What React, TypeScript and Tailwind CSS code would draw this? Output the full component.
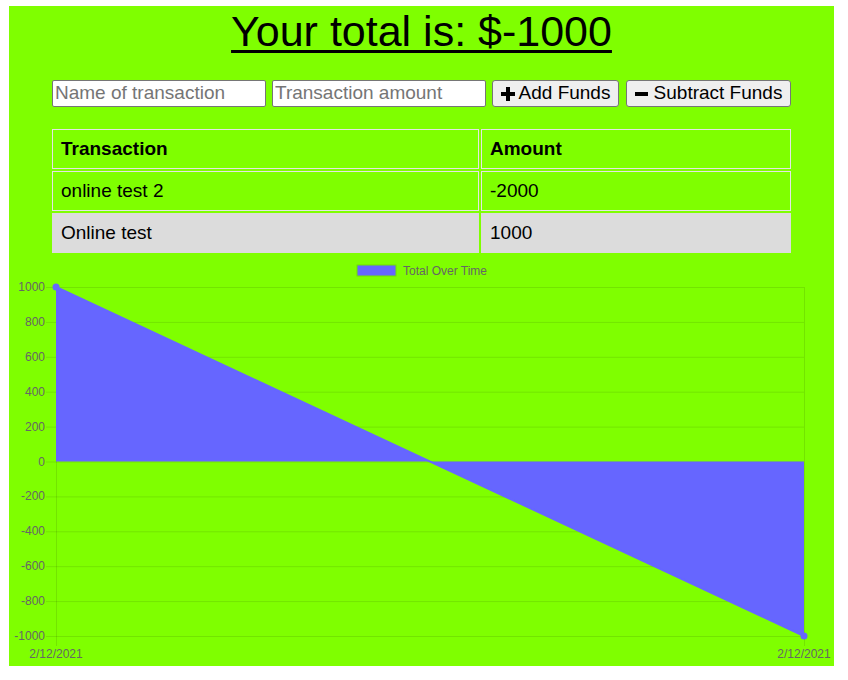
const rows = [
  { name: 'online test 2', amount: '-2000', shaded: false },
  { name: 'Online test', amount: '1000', shaded: true },
]

const yTicks = [1000, 800, 600, 400, 200, 0, -200, -400, -600, -800, -1000]

// plot area inside the chart svg
const left = 47
const right = 795
const top = 29
const bottom = 378
const step = (bottom - top) / 10
const zeroY = top + 5 * step

const Chart = () => {
  return (
    <svg width={825} height={408} className="block">
      {/* legend */}
      <rect x={348} y={7} width={39} height={11} fill="#6666ff" stroke="#70e000" strokeWidth={1} />
      <text x={394} y={16.5} fontSize={12} fill="#666" fontFamily="'Liberation Sans', Arial, sans-serif">
        Total Over Time
      </text>

      {/* horizontal grid */}
      {yTicks.map((t, i) => {
        const y = top + i * step
        return (
          <g key={t}>
            <line x1={37} x2={right} y1={y + 0.5} y2={y + 0.5} stroke="rgba(0,0,0,0.1)" strokeWidth={1} />
            <text
              x={36}
              y={y + 4}
              textAnchor="end"
              fontSize={12}
              fill="#666"
              fontFamily="'Liberation Sans', Arial, sans-serif"
            >
              {t}
            </text>
          </g>
        )
      })}

      {/* vertical grid */}
      <line x1={left + 0.5} x2={left + 0.5} y1={top} y2={bottom + 10} stroke="rgba(0,0,0,0.1)" />
      <line x1={right + 0.5} x2={right + 0.5} y1={top} y2={bottom + 10} stroke="rgba(0,0,0,0.1)" />

      {/* area */}
      <polygon
        points={`${left},${zeroY} ${left},${top} ${right},${bottom} ${right},${zeroY}`}
        fill="#6666ff"
      />
      <line x1={left} y1={top} x2={right} y2={bottom} stroke="#6666ff" strokeWidth={2} />
      <circle cx={left} cy={top} r={3.5} fill="#6666ff" />
      <circle cx={right} cy={bottom} r={3.5} fill="#6666ff" />

      {/* x labels */}
      <text x={left} y={400} textAnchor="middle" fontSize={12} fill="#666" fontFamily="'Liberation Sans', Arial, sans-serif">
        2/12/2021
      </text>
      <text x={right} y={400} textAnchor="middle" fontSize={12} fill="#666" fontFamily="'Liberation Sans', Arial, sans-serif">
        2/12/2021
      </text>
    </svg>
  )
}

const App = () => {
  return (
    <div className="min-h-screen bg-white pl-[9px] pt-[6px] font-['Liberation_Sans',Arial,sans-serif] text-black">
      <div className="flex h-[660px] w-[825px] flex-col items-center bg-[#7fff00]">
        <h1 className="pt-[4px] text-[43px] leading-none underline decoration-[3px] underline-offset-[4px]">
          Your total is: $-1000
        </h1>

        <form className="mt-[27px] flex gap-[6px]" onSubmit={(e) => e.preventDefault()}>
          <input
            type="text"
            placeholder="Name of transaction"
            className="h-[27px] w-[214px] rounded-[2px] border border-[#767676] bg-white px-[2px] text-[19px] placeholder:text-[#757575]"
          />
          <input
            type="number"
            placeholder="Transaction amount"
            className="h-[27px] w-[214px] rounded-[2px] border border-[#767676] bg-white px-[2px] text-[19px] placeholder:text-[#757575]"
          />
          <button className="flex h-[27px] w-[127px] items-center justify-center gap-[4px] rounded-[3px] border border-[#767676] bg-[#efefef] text-[19px]">
            <svg width="14" height="14" viewBox="0 0 14 14">
              <rect x="5" y="0" width="4" height="14" fill="black" />
              <rect x="0" y="5" width="14" height="4" fill="black" />
            </svg>
            Add Funds
          </button>
          <button className="ml-[1px] flex h-[27px] w-[165px] items-center justify-center gap-[6px] rounded-[3px] border border-[#767676] bg-[#efefef] text-[19px]">
            <svg width="13" height="14" viewBox="0 0 13 14">
              <rect x="0" y="5" width="13" height="4" fill="black" />
            </svg>
            Subtract Funds
          </button>
        </form>

        <div className="mt-[22px] grid grid-cols-[427px_310px] gap-[2px] text-[19px]">
          <div className="flex h-[40px] items-center border border-[#e4e4e4] pl-[8px] font-bold">Transaction</div>
          <div className="flex h-[40px] items-center border border-[#e4e4e4] pl-[8px] font-bold">Amount</div>
          {rows.map((r) => (
            <>
              <div
                key={r.name}
                className={
                  r.shaded
                    ? 'flex h-[40px] items-center border border-[#dcdcdc] bg-[#dcdcdc] pl-[8px]'
                    : 'flex h-[40px] items-center border border-[#e4e4e4] pl-[8px]'
                }
              >
                {r.name}
              </div>
              <div
                key={r.name + '-amt'}
                className={
                  r.shaded
                    ? 'flex h-[40px] items-center border border-[#dcdcdc] bg-[#dcdcdc] pl-[8px]'
                    : 'flex h-[40px] items-center border border-[#e4e4e4] pl-[8px]'
                }
              >
                {r.amount}
              </div>
            </>
          ))}
        </div>

        <div className="mt-[5px] self-start">
          <Chart />
        </div>
      </div>
    </div>
  )
}

export default App
